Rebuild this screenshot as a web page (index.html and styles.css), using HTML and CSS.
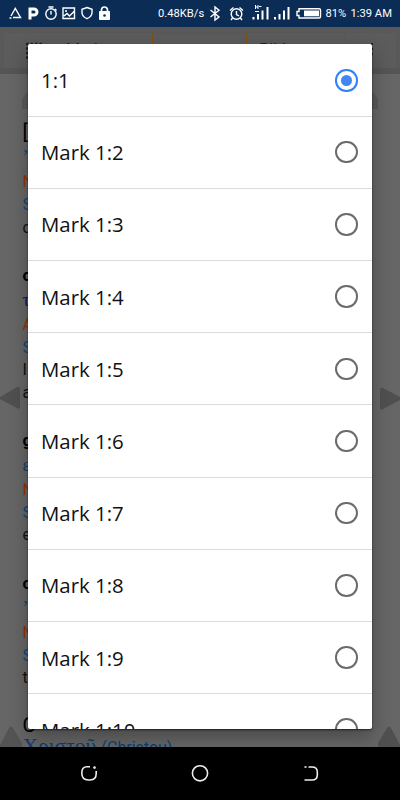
FILE: index.html
```
<!DOCTYPE html>
<html lang="en">

<head>
	<meta charset="UTF-8">
	<title>Mark 1</title>
	<link rel="stylesheet" href="styles.css">
</head>

<body>
	<div class="phone">
		<div class="status">
			<svg class="status_icons" width="112" height="27" viewBox="0 0 112 27" fill="none" stroke="#fff" stroke-width="1.4">
				<path d="M11 16L15.300 8.500L20.500 17.500H13M9.500 18H11.500" />
				<path d="M30 19.500V9H34A3 3 0 0 1 34 15H31" stroke-width="3" />
				<circle cx="51" cy="14" r="5.200" />
				<path d="M48.500 7H53.500M51 11V14.500M55 9L56.500 10.500" />
				<path d="M63 8H74.500V18.500H63ZM64 16L67 13.500L69.500 16L74 11.500M65 11H67" />
				<path d="M87 7.500L92 9.300V13Q91.500 16.800 87 18.700Q82.500 16.800 82 13V9.300Z" />
				<path d="M101.500 12V10A3 3 0 0 1 107.500 10V12" stroke-width="1.700" />
				<path d="M99.500 11.500H109.500V19.500H99.500Z" fill="#fff" stroke-width="1" />
				<circle cx="104.500" cy="15.500" r="1.300" fill="#0b2c54" stroke="none" />
			</svg>
			<span class="speed">0.48KB/s</span>
			<svg width="118" height="27" viewBox="205 0 118 27" fill="none" stroke="#fff" stroke-width="1.4">
				<path d="M210.500 10L219 17L215 20V7L219 10.300L210.500 17" />
				<circle cx="236.500" cy="14" r="5.300" />
				<path d="M230 10.500L233.500 7.500M239.500 7.500L243 10.500M236.500 11V14.500L239 16M232.500 18L231 20M240.500 18L242 20" />
				<path d="M253.500 17V19.500M258 14V19.500M262.500 10.500V19.500M267.500 7V19.500" stroke-width="2" />
				<path d="M255.500 5V9M258 5V9M255.500 7H258M259 6.500H261.500M255 11.500H259" stroke-width="1" />
				<path d="M275 17V19.500M279.500 14V19.500M284 10.500V19.500M288.500 7V19.500" stroke-width="2" />
				<path d="M299 8.700H319Q320.500 8.700 320.500 10V16.500Q320.500 18 319 18H299V15.500H297V11.500H299Z" />
				<path d="M304 10.500H319V16.300H304Z" fill="#fff" stroke="none" />
			</svg>
			<span class="percent">81%</span>
			<span class="time">1:39 AM</span>
		</div>

		<div class="toolbar">
			<div class="tool grid_tool">
				<svg width="18" height="18" viewBox="0 0 18 18" fill="none" stroke="#202020" stroke-width="2.500" stroke-dasharray="2.500 2">
					<path d="M1 2H17M1 6.500H17M1 11H17M1 15.500H17" />
				</svg>
			</div>
			<div class="tool book_tool">Mark</div>
			<div class="tool verse_tool"></div>
			<div class="tool bible_tool">Bible</div>
			<div class="tool more_tool">
				<svg width="4" height="18" viewBox="0 0 4 18"><path d="M1 1H3V3H1ZM1 6H3V8H1ZM1 11H3V13H1Z" fill="#202020" /></svg>
			</div>
		</div>

		<div class="page">
			<div class="word">
				<p class="english plain">[</p>
				<p class="greek">’Α</p>
				<p class="part">N</p>
				<p class="strongs">S</p>
				<p>c</p>
			</div>
			<div class="word">
				<p class="english">o</p>
				<p class="greek navy">τ</p>
				<p class="part">A</p>
				<p class="strongs">S</p>
				<p>I</p>
				<p>a</p>
			</div>
			<div class="word">
				<p class="english">g</p>
				<p class="greek">ε</p>
				<p class="part">N</p>
				<p class="strongs">S</p>
				<p>e</p>
			</div>
			<div class="word">
				<p class="english">o</p>
				<p class="greek">’Ι</p>
				<p class="part">N</p>
				<p class="strongs">S</p>
				<p>t</p>
			</div>
			<div class="word">
				<p class="english plain">C</p>
				<p class="greek last">Χριστοῦ <span>(Christou)</span></p>
			</div>
		</div>

		<div class="softkeys">
			<svg width="400" height="53" viewBox="0 747 400 53" fill="none" stroke="#eee" stroke-width="1.600">
				<path d="M90 766.800H87Q81.800 766.800 81.800 773Q81.800 780 88.500 780H90Q96.200 780 96.200 773.500V771" />
				<circle cx="94.500" cy="767.600" r="1.300" fill="#eee" stroke="none" />
				<circle cx="200" cy="773.300" r="7.600" />
				<path d="M308.500 767H312Q317.300 767 317.300 772V775Q317.300 780 312 780H304.500" />
				<path d="M304.500 767H306.500" />
			</svg>
		</div>

		<!-- page turn arrows and round buttons -->
		<svg class="arrows" width="400" height="747" viewBox="0 0 400 747">
			<path d="M0 397L17 387Q20 386 20 389V406Q20 410 17 408L0 399Z" fill="#505050" />
			<path d="M400 397L383 388Q380 387 380 390V407Q380 411 383 409L400 400Z" fill="#505050" />
			<path d="M0 745L9 728Q11 725 13 728L22 743V747H0Z" fill="#545454" />
			<path d="M400 745L391 728Q389 725 387 728L378 743V747H400Z" fill="#505050" />
			<path d="M22 109V101Q23 96 28 92V109ZM378 109V101Q377 96 372 92V109Z" fill="#595959" />
		</svg>

		<div class="dialog">
			<div class="row"><span>1:1</span><i class="radio checked"></i></div>
			<div class="row"><span>Mark 1:2</span><i class="radio"></i></div>
			<div class="row"><span>Mark 1:3</span><i class="radio"></i></div>
			<div class="row"><span>Mark 1:4</span><i class="radio"></i></div>
			<div class="row"><span>Mark 1:5</span><i class="radio"></i></div>
			<div class="row"><span>Mark 1:6</span><i class="radio"></i></div>
			<div class="row"><span>Mark 1:7</span><i class="radio"></i></div>
			<div class="row"><span>Mark 1:8</span><i class="radio"></i></div>
			<div class="row"><span>Mark 1:9</span><i class="radio"></i></div>
			<div class="row"><span>Mark 1:10</span><i class="radio"></i></div>
		</div>
	</div>
</body>

</html>
```
FILE: styles.css
```
* {
	box-sizing: border-box;
}

body {
	margin: 0;
	background: #000;
}

p {
	margin: 0;
}

.phone {
	position: relative;
	display: flex;
	flex-direction: column;
	width: 400px;
	height: 800px;
	overflow: hidden;
	font-family: Roboto, sans-serif;
}

.status {
	display: flex;
	align-items: center;
	flex: none;
	height: 27px;
	background: #0b2c54;
	color: #fff;
	font-size: 11.2px;
	white-space: nowrap;
}

.status svg {
	flex: none;
}

.speed {
	width: 47px;
	margin-left: 46px;
}

.percent {
	width: 25px;
	margin-left: 2.5px;
}

.toolbar {
	display: flex;
	flex: none;
	height: 47px;
	padding: 6px 4px 0;
	background: #595959;
	border-bottom: 6px solid #555;
}

.tool {
	height: 35px;
	padding-top: 8px;
	background: #5c5c5c;
	color: #202020;
	font-size: 16px;
	line-height: 18px;
}

.grid_tool {
	width: 50px;
	padding-top: 9px;
	padding-left: 21px;
}

.book_tool {
	width: 98px;
	padding-left: 12px;
}

.verse_tool {
	width: 96px;
	border: 1px solid #805015;
}

.bible_tool {
	width: 97px;
	padding-left: 12px;
}

.more_tool {
	width: 51px;
	margin-left: 1px;
	padding-top: 9px;
	padding-left: 25px;
}

.page {
	flex: none;
	height: 673px;
	padding: 46px 22.5px 0;
	overflow: hidden;
	background: #666;
	color: #111;
	font-size: 16px;
	line-height: 22.5px;
}

.word {
	margin-bottom: 23.7px;
}

.word .english {
	font-size: 17px;
	font-weight: bold;
	line-height: 24px;
	color: #000;
}

.word .plain {
	font-size: 20px;
	font-weight: normal;
}

.greek {
	font-family: "Liberation Serif", serif;
	font-size: 18px;
	line-height: 26px;
	color: #0c3f70;
}

.greek.navy {
	color: #15155f;
}

.greek.last {
	margin-top: -4px;
	font-size: 21.5px;
	white-space: nowrap;
}

.greek span {
	font-family: Roboto, sans-serif;
	font-size: 16px;
}

.part {
	line-height: 24px;
	color: #9a3008;
}

.strongs {
	color: #0c4780;
}

.softkeys {
	flex: none;
	height: 53px;
	background: #000;
}

.arrows {
	position: absolute;
	top: 0;
	left: 0;
}

/* verse picker */
.dialog {
	position: absolute;
	top: 44px;
	left: 28px;
	width: 344px;
	height: 685px;
	overflow: hidden;
	background: #fff;
	border-radius: 2px;
	box-shadow: 0 1px 2px rgba(0, 0, 0, 0.6), 0 8px 20px rgba(0, 0, 0, 0.3);
}

.row {
	display: flex;
	align-items: center;
	justify-content: space-between;
	height: 72.2px;
	padding: 0 14.5px 0 13px;
	border-bottom: 1px solid #dcdcdc;
	font-family: "Open Sans", "Noto Sans", sans-serif;
	font-size: 20.4px;
	color: #111;
}

.row:first-child {
	height: 72.6px;
	padding-top: 1px;
}

.radio {
	display: flex;
	align-items: center;
	justify-content: center;
	width: 22.5px;
	height: 22.5px;
	border: 2px solid #6b6b6b;
	border-radius: 50%;
}

.radio.checked {
	border-color: #2f80fa;
}

.radio.checked::after {
	content: "";
	width: 11px;
	height: 11px;
	border-radius: 50%;
	background: #4285f4;
}
```
